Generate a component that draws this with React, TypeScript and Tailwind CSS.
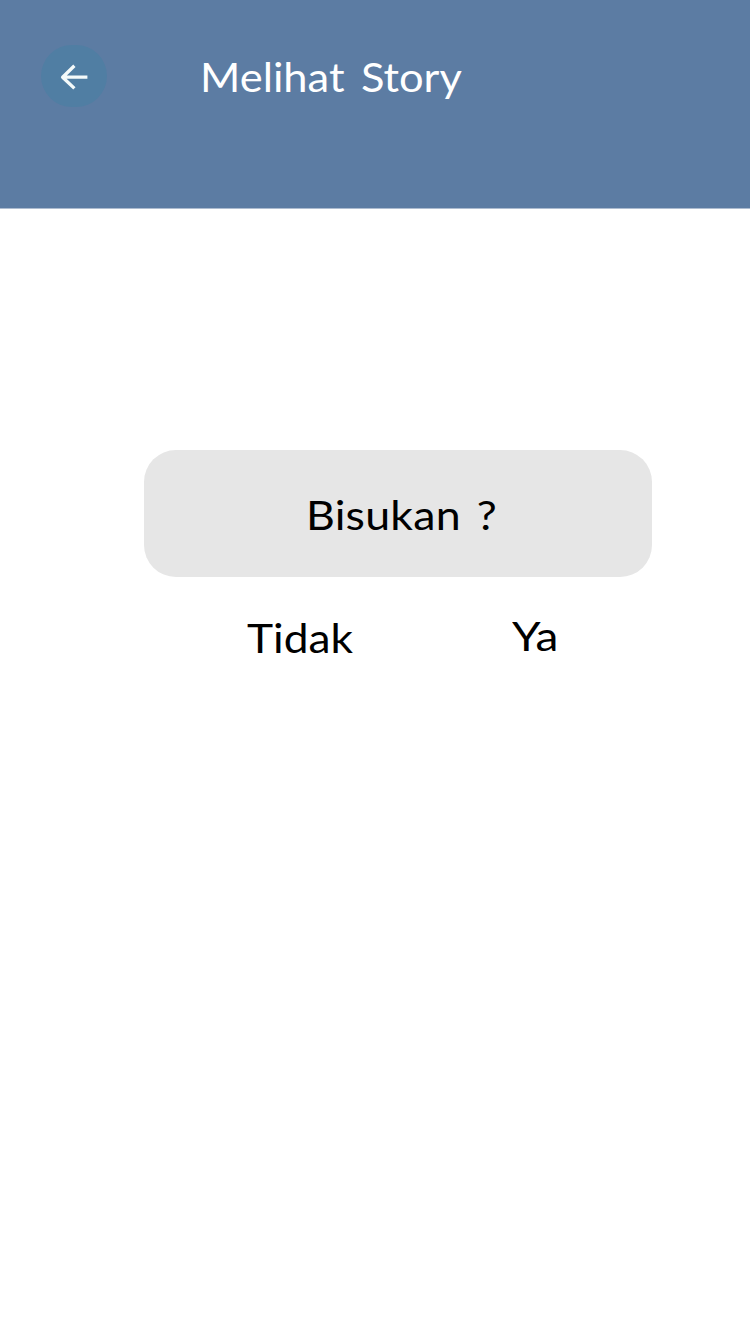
export default function App() {
  return (
    <main className="flex h-[1334px] w-[750px] flex-col bg-white font-['Lato',sans-serif] text-black">
      <header className="flex h-[209px] items-start border-b border-[#adbcd0] bg-[#5c7ca3] pl-[41px] pt-[45px]">
        <button aria-label="Kembali" className="flex h-[62px] w-[66px] items-center justify-center rounded-full bg-[#507ea3]">
          <svg className="h-8 w-8" viewBox="0 0 32 32" fill="none" stroke="#f4fafa" strokeWidth="3.3" strokeLinejoin="round">
            <path d="M29.4 17.2H4.6M16.4 5.8L4.6 17.2L16.4 28.4" />
          </svg>
        </button>
        <h1 className="ml-[93px] mt-1 origin-left scale-x-106 whitespace-nowrap text-[41px] leading-[56px] text-white [word-spacing:5px]">Melihat Story</h1>
      </header>
      <section className="ml-[143.7px] mt-[241px] w-[508.3px]">
        <h2 className="flex h-[127px] items-center rounded-[32px] bg-[#e6e6e6] pl-[162px] pt-[2px] text-[41px]">
          <span className="origin-left scale-x-109 whitespace-nowrap tracking-[0.2px] [word-spacing:4px]">Bisukan ?</span>
        </h2>
        <div className="flex items-start pl-[103px] pt-[33px] text-[41px] leading-[56px]">
          <button className="w-[265px] origin-left scale-x-108 text-left">Tidak</button>
          <button className="-mt-[2px] origin-left scale-x-112">Ya</button>
        </div>
      </section>
    </main>
  );
}
